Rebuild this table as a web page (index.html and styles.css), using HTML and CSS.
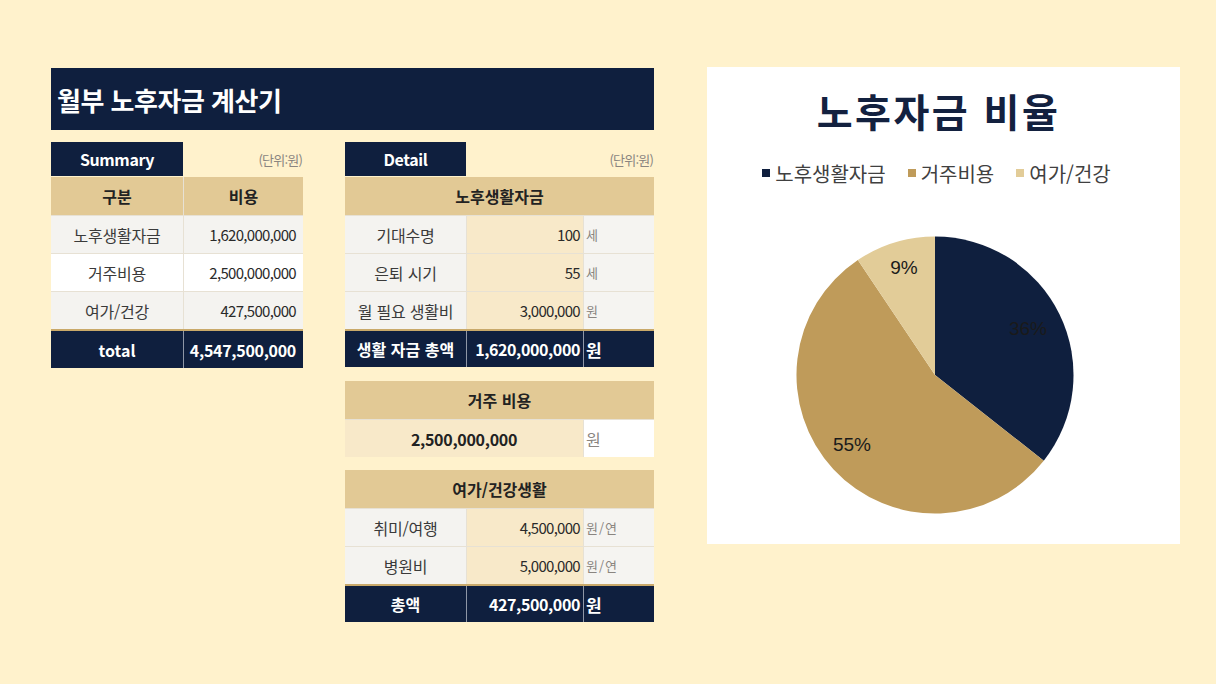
FILE: index.html
```html
<!DOCTYPE html>
<html lang="ko">
<head>
<meta charset="utf-8">
<title>월부 노후자금 계산기</title>
<link rel="stylesheet" href="styles.css">
</head>
<body>
<div class="page">
  <div class="left">
    <div class="title-bar">월부 노후자금 계산기</div>
    <div class="tables">
      <div class="summary">
        <div class="tab-row">
          <div class="tab tab-sum">Summary</div>
          <div class="unit-note">(단위:원)</div>
        </div>
        <div class="grid sum-grid">
          <div class="cell head">구분</div>
          <div class="cell head">비용</div>
          <div class="cell label gray">노후생활자금</div>
          <div class="cell num gray">1,620,000,000</div>
          <div class="cell label white">거주비용</div>
          <div class="cell num white">2,500,000,000</div>
          <div class="cell label gray">여가/건강</div>
          <div class="cell num gray">427,500,000</div>
        </div>
        <div class="total sum-total">
          <div class="cell tcell tlabel">total</div>
          <div class="cell tcell tnum big">4,547,500,000</div>
        </div>
      </div>

      <div class="detail">
        <div class="tab-row">
          <div class="tab tab-det">Detail</div>
          <div class="unit-note">(단위:원)</div>
        </div>
        <div class="block">
          <div class="grid det-grid">
            <div class="cell head span3">노후생활자금</div>
            <div class="cell label gray">기대수명</div>
            <div class="cell num cream">100</div>
            <div class="cell unit">세</div>
            <div class="cell label gray">은퇴 시기</div>
            <div class="cell num cream">55</div>
            <div class="cell unit">세</div>
            <div class="cell label gray">월 필요 생활비</div>
            <div class="cell num cream">3,000,000</div>
            <div class="cell unit">원</div>
          </div>
          <div class="total det-total">
            <div class="cell tcell tlabel">생활 자금 총액</div>
            <div class="cell tcell tnum">1,620,000,000</div>
            <div class="cell tcell tunit">원</div>
          </div>
        </div>

        <div class="block block-house">
          <div class="grid det-grid">
            <div class="cell head span3">거주 비용</div>
            <div class="cell cream bignum span2">2,500,000,000</div>
            <div class="cell unit white plain">원</div>
          </div>
        </div>

        <div class="block block-leisure">
          <div class="grid det-grid">
            <div class="cell head span3">여가/건강생활</div>
            <div class="cell label gray">취미/여행</div>
            <div class="cell num cream">4,500,000</div>
            <div class="cell unit">원/연</div>
            <div class="cell label gray">병원비</div>
            <div class="cell num cream">5,000,000</div>
            <div class="cell unit">원/연</div>
          </div>
          <div class="total det-total">
            <div class="cell tcell tlabel">총액</div>
            <div class="cell tcell tnum">427,500,000</div>
            <div class="cell tcell tunit">원</div>
          </div>
        </div>
      </div>
    </div>
  </div>

  <div class="chart">
    <div class="chart-title">노후자금 비율</div>
    <div class="legend">
      <span class="lg"><i class="sw sw-navy"></i>노후생활자금</span>
      <span class="lg"><i class="sw sw-tan"></i>거주비용</span>
      <span class="lg"><i class="sw sw-light"></i>여가/건강</span>
    </div>
    <svg class="pie" width="473" height="358" viewBox="0 0 473 358">
      <path d="M228,189 L228,50.5 A138.5,138.5 0 0 1 336.78,274.73 Z" fill="#0f1f3e"/>
      <path d="M228,189 L336.78,274.73 A138.5,138.5 0 1 1 150.84,74.0 Z" fill="#bf9b5a"/>
      <path d="M228,189 L150.84,74.0 A138.5,138.5 0 0 1 228,50.5 Z" fill="#e2cc98"/>
      <text x="321" y="142" class="pl">36%</text>
      <text x="145" y="258" class="pl">55%</text>
      <text x="197" y="81" class="pl">9%</text>
    </svg>
  </div>
</div>
</body>
</html>
```

FILE: styles.css
```css
html, body {
  margin: 0;
  padding: 0;
}
body {
  background: #fff2cc;
  width: 1216px;
  height: 684px;
  overflow: hidden;
  font-family: "Noto Sans CJK KR", "Noto Sans", sans-serif;
  color: #333;
}
.page {
  display: flex;
  align-items: flex-start;
  padding: 67px 0 0 51px;
}
.left {
  width: 603px;
  padding-top: 1px;
}
.title-bar {
  height: 62px;
  background: #0f1f3e;
  color: #fff;
  font-size: 26px;
  font-weight: 700;
  display: flex;
  align-items: center;
  padding-left: 6px;
  letter-spacing: -0.5px;
}
.tables {
  display: flex;
  gap: 42px;
  margin-top: 12px;
}
.summary { width: 252px; }
.detail { width: 309px; }

.tab-row {
  display: flex;
  align-items: center;
  justify-content: space-between;
  height: 34px;
  margin-bottom: 1px;
}
.tab {
  height: 34px;
  background: #0f1f3e;
  color: #fff;
  font-weight: 700;
  font-size: 16px;
  display: flex;
  align-items: center;
  justify-content: center;
  letter-spacing: -0.4px;
}
.tab-sum { width: 132px; }
.tab-det { width: 121px; }
.unit-note {
  font-size: 13px;
  color: #8a8580;
  padding-right: 1px;
  letter-spacing: -0.8px;
}

.grid {
  display: grid;
  gap: 1px;
  background: #e7e1d4;
}
.sum-grid {
  grid-template-columns: 132px 119px;
  grid-template-rows: 38px 37px 37px 37px;
}
.det-grid {
  grid-template-columns: 121px 116px 70px;
  grid-auto-rows: 37px;
  grid-template-rows: 38px;
}
.cell {
  display: flex;
  align-items: center;
  justify-content: center;
  font-size: 16px;
  white-space: nowrap;
}
.head {
  background: #e2c995;
  font-weight: 700;
  font-size: 16px;
  color: #222;
}
.span3 { grid-column: span 3; }
.span2 { grid-column: span 2; }
.label { color: #3a3a3a; letter-spacing: -0.2px; }
.gray { background: #f4f3f0; }
.white { background: #fff; }
.cream { background: #f8e9c9; }
.num {
  justify-content: flex-end;
  padding-right: 7px;
  font-size: 15px;
  letter-spacing: -0.7px;
  color: #2a2a2a;
}
.det-grid .num { padding-right: 3px; }
.unit {
  background: #f5f4f1;
  justify-content: flex-start;
  padding-left: 2px;
  font-size: 13px;
  color: #8a8580;
  letter-spacing: 1px;
}
.unit.plain {
  background: #fff;
  font-size: 16px;
  padding-left: 2px;
  letter-spacing: 0;
}
.bignum {
  font-weight: 700;
  font-size: 16px;
  color: #222;
  letter-spacing: -0.3px;
}

.total {
  display: grid;
  gap: 1px;
  background: #8e96a6;
  border-top: 2px solid #c9a96a;
}
.sum-total {
  grid-template-columns: 132px 119px;
  grid-template-rows: 37px;
}
.det-total {
  grid-template-columns: 121px 116px 70px;
  grid-template-rows: 36px;
}
.tcell {
  background: #0f1f3e;
  color: #fff;
  font-weight: 700;
  font-size: 16px;
}
.tnum {
  justify-content: flex-end;
  padding-right: 3px;
  letter-spacing: -0.4px;
}
.tnum.big {
  font-size: 16px;
  padding-right: 7px;
  letter-spacing: -0.3px;
}
.tunit {
  justify-content: flex-start;
  padding-left: 2px;
  font-size: 17px;
}
.block-house { margin-top: 14px; }
.block-leisure { margin-top: 13px; }

.chart {
  width: 473px;
  height: 477px;
  margin-left: 53px;
  background: #fff;
  display: flex;
  flex-direction: column;
  align-items: center;
}
.chart-title {
  margin-top: 20px;
  height: 46px;
  line-height: 46px;
  font-size: 39px;
  font-weight: 700;
  color: #13213f;
  letter-spacing: 2.5px;
  padding-right: 10px;
}
.legend {
  margin-top: 27px;
  height: 26px;
  display: flex;
  align-items: center;
  gap: 22px;
  font-size: 20px;
  color: #404040;
  padding-right: 14px;
}
.lg {
  display: flex;
  align-items: center;
}
.sw {
  display: inline-block;
  width: 8px;
  height: 8px;
  margin-right: 5px;
}
.sw-navy { background: #0f1f3e; }
.sw-tan { background: #bf9b5a; }
.sw-light { background: #e2cc98; }
.pie { display: block; }
.pl {
  font-family: "Liberation Sans", Arial, sans-serif;
  font-size: 19px;
  fill: #1a1a1a;
  text-anchor: middle;
  dominant-baseline: central;
}
```
